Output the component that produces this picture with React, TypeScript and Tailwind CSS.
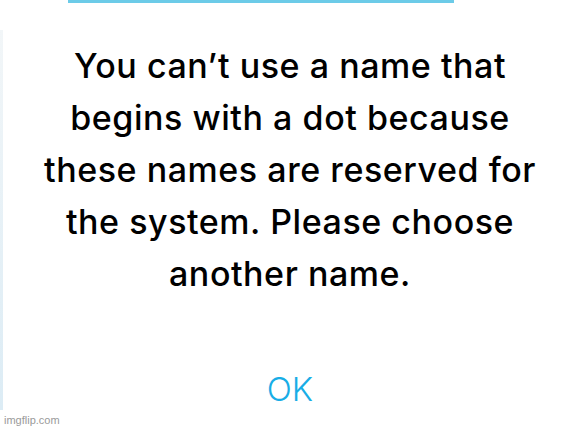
export default function App() {
  return (
    <main
      className="relative h-[431px] w-[578px] overflow-hidden bg-white"
      style={{ fontFamily: "Inter, 'Noto Sans', sans-serif" }}
    >
      <div className="ml-[68px] h-[3px] w-[386px] bg-[#6ccbe8]" />
      <div className="absolute left-0 top-[30px] h-[380px] w-[3px] bg-gradient-to-b from-[#f2f6f8] to-[#dcecf5]" />
      <div className="flex flex-col items-center pl-[2px] pt-[37px]">
        <p className="text-center text-[34px] font-[450] leading-[52px] tracking-[0.55px] text-black">
          You can’t use a name that
          <br />
          begins with a dot because
          <br />
          these names are reserved for
          <br />
          the system. Please choose
          <br />
          another name.
        </p>
        <button className="mt-[69px] text-[33px] font-light leading-[40px] text-[#18ade6]">
          OK
        </button>
      </div>
      <p
        className="absolute bottom-[3px] left-[4px] text-[11px] text-[#9a9a9a]"
        style={{ fontFamily: "'Liberation Sans', Arial, sans-serif" }}
      >
        imgflip.com
      </p>
    </main>
  );
}
